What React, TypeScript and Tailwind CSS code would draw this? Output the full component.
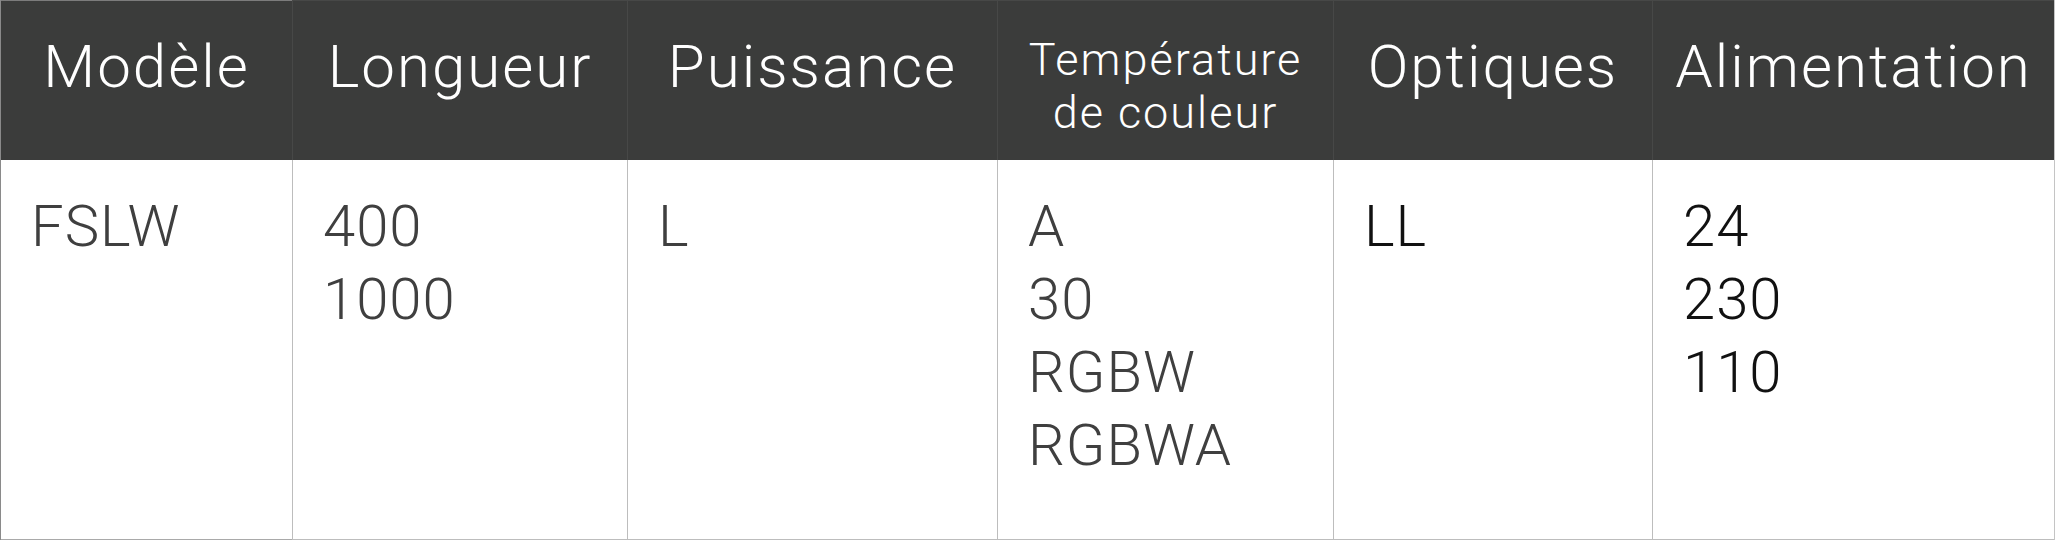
import React from 'react';

const columns = [
    { title: 'Modèle', width: 'w-[291px]', values: ['FSLW'], dark: false },
    { title: 'Longueur', width: 'w-[335px]', values: ['400', '1000'], dark: false },
    { title: 'Puissance', width: 'w-[370px]', values: ['L'], dark: false },
    { title: 'Température de couleur', width: 'w-[336px]', values: ['A', '30', 'RGBW', 'RGBWA'], dark: false, small: true },
    { title: 'Optiques', width: 'w-[319px]', values: ['LL'], dark: true },
    { title: 'Alimentation', width: 'w-[403px]', values: ['24', '230', '110'], dark: true },
];

const App: React.FC = () => {
    return (
        <div className="w-[2058px] h-[544px] bg-white" style={{ fontFamily: 'Roboto, "Noto Sans", sans-serif' }}>
            <div className="flex w-[2055px] border-l border-[#8a8a8a]">
                {columns.map((col, index) => (
                    <div key={index} className={`${col.width} flex flex-col ${index === columns.length - 1 ? 'border-r border-[#c4c4c4]' : ''}`}>
                        <div className={`h-[160px] bg-[#3b3c3b] border-t border-[#7c7c7c] text-white text-center font-light ${index > 0 ? 'border-l border-[#474847]' : ''}`}>
                            {col.small ? (
                                <div className="pt-[32px] text-[45px] leading-[53px] tracking-[2px] whitespace-nowrap">
                                    Température<br />de couleur
                                </div>
                            ) : (
                                <div className="pt-[36px] text-[60px] leading-[60px] tracking-[2px] whitespace-nowrap">{col.title}</div>
                            )}
                        </div>
                        <div className={`h-[380px] pt-[30px] pl-[30px] border-b border-[#a9a9a9] text-[58px] leading-[73px] tracking-[1px] font-light ${index > 0 ? 'border-l border-[#bdbdbd]' : ''} ${col.dark ? 'text-[#111111]' : 'text-[#3f3f3f]'}`}>
                            {col.values.map((v, i) => (
                                <div key={i}>{v}</div>
                            ))}
                        </div>
                    </div>
                ))}
            </div>
        </div>
    );
};

export default App;
